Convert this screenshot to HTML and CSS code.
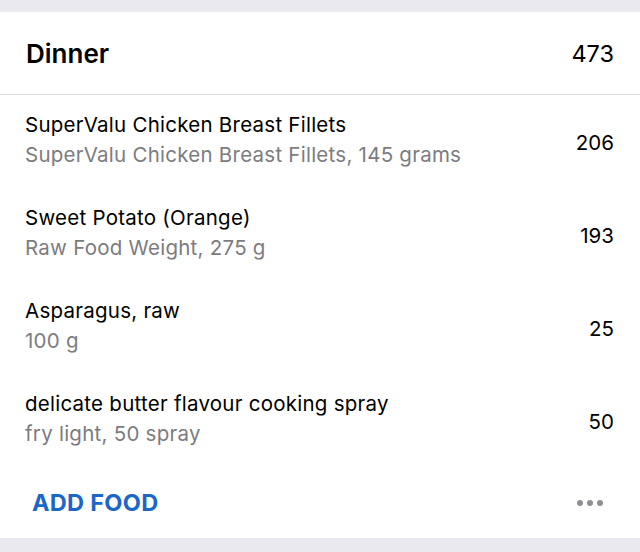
FILE: index.html
```html
<!DOCTYPE html>
<html>
<head>
<meta charset="utf-8">
<link rel="stylesheet" href="styles.css">
</head>
<body>
<div class="card">
  <div class="header">
    <span class="meal">Dinner</span>
    <span class="total">473</span>
  </div>
  <div class="row">
    <div class="info">
      <div class="name">SuperValu Chicken Breast Fillets</div>
      <div class="desc">SuperValu Chicken Breast Fillets, 145 grams</div>
    </div>
    <div class="cal">206</div>
  </div>
  <div class="row">
    <div class="info">
      <div class="name">Sweet Potato (Orange)</div>
      <div class="desc">Raw Food Weight, 275 g</div>
    </div>
    <div class="cal">193</div>
  </div>
  <div class="row">
    <div class="info">
      <div class="name">Asparagus, raw</div>
      <div class="desc">100 g</div>
    </div>
    <div class="cal">25</div>
  </div>
  <div class="row">
    <div class="info">
      <div class="name">delicate butter flavour cooking spray</div>
      <div class="desc">fry light, 50 spray</div>
    </div>
    <div class="cal">50</div>
  </div>
  <div class="footer">
    <span class="add">ADD FOOD</span>
    <span class="more"><i></i><i></i><i></i></span>
  </div>
</div>
</body>
</html>
```
FILE: styles.css
```css
html, body {
  margin: 0;
  padding: 0;
  background: #e9e9ef;
  font-family: Inter, "Liberation Sans", sans-serif;
}
.card {
  margin-top: 12px;
  background: #fff;
  height: 526px;
}
.header {
  height: 82px;
  border-bottom: 1px solid #dcdcdf;
  display: flex;
  align-items: center;
  justify-content: space-between;
  padding: 0 26px 0 26px;
}
.meal {
  font-size: 26px;
  font-weight: 600;
  color: #000;
}
.total {
  font-size: 23.5px;
  color: #000;
}
.row {
  height: 93px;
  display: flex;
  align-items: center;
  justify-content: space-between;
  padding: 0 26px 0 25px;
}
.info {
  margin-bottom: 4px;
}
.name {
  font-size: 20.5px;
  line-height: 30px;
  color: #000;
  letter-spacing: 0.25px;
}
.desc {
  font-size: 20.5px;
  line-height: 30px;
  color: #7c7c80;
  letter-spacing: 0.25px;
}
.cal {
  font-size: 20.5px;
  color: #000;
  margin-top: 2px;
}
.footer {
  height: 71px;
  display: flex;
  align-items: center;
  justify-content: space-between;
  padding: 0 37px 0 32px;
}
.add {
  font-size: 23.5px;
  font-weight: 700;
  color: #1b66c9;
  letter-spacing: 0.3px;
}
.more {
  display: flex;
  gap: 4px;
}
.more i {
  display: block;
  width: 6px;
  height: 6px;
  border-radius: 50%;
  background: #8e8e93;
}
```
